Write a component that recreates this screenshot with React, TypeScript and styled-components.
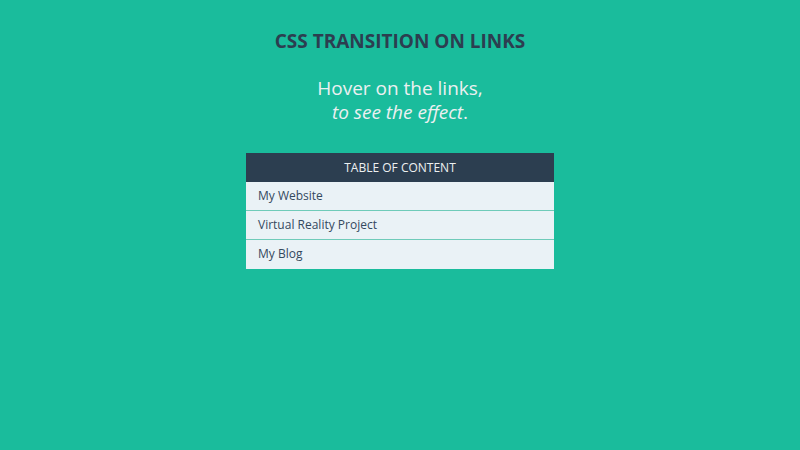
import React from 'react';
import styled, { createGlobalStyle } from 'styled-components';

const colors = {
  background: '#1abc9c',
  dark: '#2c3e50',
  text: '#34495e',
  light: '#ecf0f1',
  row: '#eaf2f6',
  divider: '#6fcbb9',
};

const GlobalStyle = createGlobalStyle`
  body {
    margin: 0;
    background-color: ${colors.background};
    font-family: 'Open Sans', sans-serif;
  }
`;

const Page = styled.main`
  display: flex;
  flex-direction: column;
  align-items: center;
  padding: 28px 16px;
`;

const Title = styled.h1`
  margin: 0;
  font-size: 19px;
  line-height: 26px;
  font-weight: 700;
  text-transform: uppercase;
  color: ${colors.dark};
`;

const Subtitle = styled.h2`
  margin: 22px 0 29px;
  font-size: 19px;
  line-height: 24px;
  font-weight: 400;
  text-align: center;
  color: ${colors.light};
`;

const Menu = styled.nav`
  width: 100%;
  max-width: 308px;
`;

const MenuHeader = styled.h3`
  margin: 0;
  font-size: 12px;
  line-height: 29px;
  font-weight: 400;
  text-align: center;
  text-transform: uppercase;
  color: ${colors.light};
  background-color: ${colors.dark};
`;

const LinkList = styled.ul`
  margin: 0;
  padding: 0;
  list-style: none;
`;

const LinkItem = styled.li`
  border-bottom: 1px solid ${colors.divider};
  &:last-child {
    border-bottom-color: ${colors.row};
  }
`;

const MenuLink = styled.a`
  display: block;
  padding: 0 12px;
  font-size: 12px;
  line-height: 28px;
  text-decoration: none;
  color: ${colors.text};
  background-color: ${colors.row};
  transition: all 0.3s ease;
  &:hover {
    padding-left: 24px;
    color: ${colors.light};
    background-color: ${colors.dark};
  }
`;

const links = ['My Website', 'Virtual Reality Project', 'My Blog'];

export default function App() {
  return (
    <>
      <GlobalStyle />
      <Page>
        <Title>CSS Transition on Links</Title>
        <Subtitle>
          Hover on the links,
          <br />
          <em>to see the effect</em>.
        </Subtitle>
        <Menu aria-labelledby="menu-title">
          <MenuHeader id="menu-title">Table of Content</MenuHeader>
          <LinkList>
            {links.map(link => (
              <LinkItem key={link}>
                <MenuLink href="#">{link}</MenuLink>
              </LinkItem>
            ))}
          </LinkList>
        </Menu>
      </Page>
    </>
  );
}
